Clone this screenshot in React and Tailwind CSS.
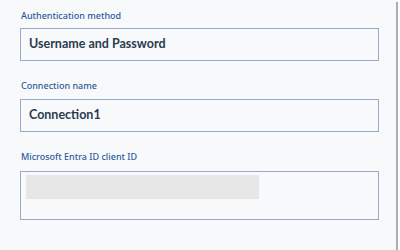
import React from 'react';

const Field = ({ label, children, className = '' }) => (
    <div className={className}>
        <div className="h-[12px] text-[9px] leading-[12px] font-medium text-[#2f5a9c] pl-[1px]">{label}</div>
        {children}
    </div>
);

// input text uses a narrower face, closer to Segoe UI semibold
const inputText = 'flex items-center pl-[8px] text-[12.5px] font-bold text-[#2c3a50] font-[Lato,"Noto_Sans",sans-serif]';

const App = () => {
    return (
        <div className="w-[400px] h-[250px] bg-[#f7f9fb] flex overflow-hidden" style={{ fontFamily: '"Noto Sans", "Open Sans", sans-serif' }}>
            {/* Form column */}
            <div className="w-[396px] pl-[20px] pr-[17px] pt-[10px]">
                <Field label="Authentication method">
                    <div className={`mt-[6px] h-[33px] border-[1.5px] border-[#94abcf] ${inputText}`}>
                        Username and Password
                    </div>
                </Field>

                <Field label="Connection name" className="mt-[19px]">
                    <div className={`mt-[7px] h-[33px] border-[1.5px] border-[#94abcf] ${inputText}`}>
                        Connection1
                    </div>
                </Field>

                <Field label="Microsoft Entra ID client ID" className="mt-[19px]">
                    <div className="mt-[8px] h-[49px] border-[1.5px] border-[#94abcf] pt-[3px] pl-[5px]">
                        <div className="w-[233px] h-[24px] bg-[#e7e7e8]" />
                    </div>
                </Field>
            </div>

            {/* Right divider */}
            <div className="w-[2px] mt-[2px] bg-[#adadad]" />
            <div className="flex-1 bg-[#fdfdfd]" />
        </div>
    );
};

export default App;
